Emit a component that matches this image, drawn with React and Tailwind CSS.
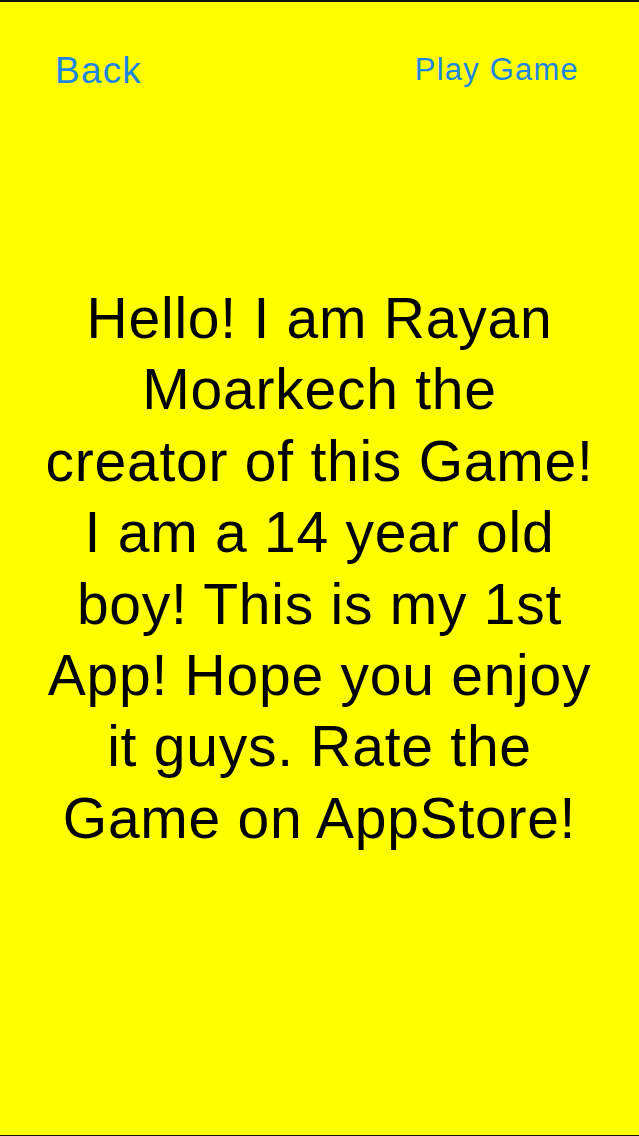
export default function App() {
  const lines = [
    "Hello! I am Rayan",
    "Moarkech the",
    "creator of this Game!",
    "I am a 14 year old",
    "boy! This is my 1st",
    "App! Hope you enjoy",
    "it guys. Rate the",
    "Game on AppStore!",
  ];
  return (
    <div
      className="h-[1136px] w-full bg-[#ffff00] border-t-2 border-b border-[#141414] flex flex-col overflow-hidden"
      style={{ fontFamily: '"Liberation Sans", Arial, sans-serif' }}
    >
      <div className="flex justify-between items-start pt-[52px] pl-[55px] pr-[60px]">
        <span className="text-[37px] leading-none tracking-[1.2px] text-[#1f86e0] -mt-[2px]">Back</span>
        <span className="text-[31px] leading-none tracking-[1.2px] text-[#1f86e0]">Play Game</span>
      </div>
      <div className="mt-[194px] flex flex-col items-center text-center text-black text-[57px] leading-[71.4px] tracking-[0.75px]">
        {lines.map((l, i) => (
          <span key={i} className="block whitespace-nowrap">{l}</span>
        ))}
      </div>
    </div>
  );
}
